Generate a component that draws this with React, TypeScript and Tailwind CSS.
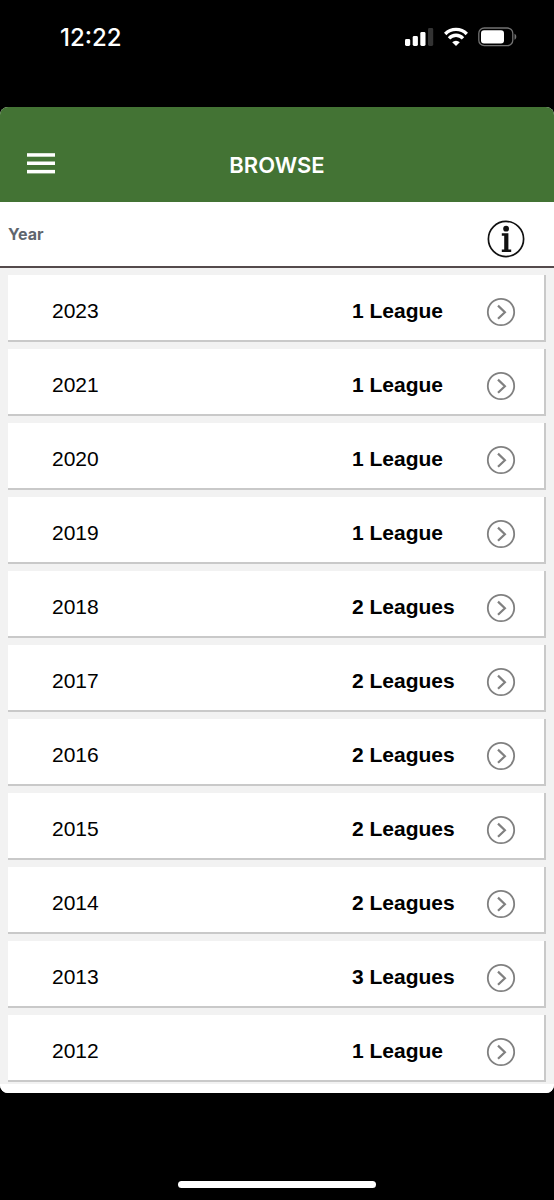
import React from 'react';

type Season = {
  year: number;
  leagues: number;
};

const seasons: Season[] = [
  { year: 2023, leagues: 1 },
  { year: 2021, leagues: 1 },
  { year: 2020, leagues: 1 },
  { year: 2019, leagues: 1 },
  { year: 2018, leagues: 2 },
  { year: 2017, leagues: 2 },
  { year: 2016, leagues: 2 },
  { year: 2015, leagues: 2 },
  { year: 2014, leagues: 2 },
  { year: 2013, leagues: 3 },
  { year: 2012, leagues: 1 },
];

function StatusBar() {
  return (
    <div className="flex h-[107px] items-start justify-between pt-[22px] pr-[37px] pl-[60px] text-white">
      <span className="text-2xl leading-[32px] font-medium">12:22</span>
      <div className="flex h-[30px] items-center gap-[10px]">
        <svg width="29" height="20" viewBox="0 0 29 20" fill="currentColor" aria-hidden="true">
          <rect x="0" y="12" width="5.2" height="7" rx="1.4" />
          <rect x="7.7" y="9" width="5.2" height="10" rx="1.4" />
          <rect x="15.3" y="5" width="5.2" height="14" rx="1.4" />
          <rect x="23" y="1" width="5.2" height="18" rx="1.4" fill="#333333" />
        </svg>
        <svg width="24" height="20" viewBox="0 0 24 20" aria-hidden="true">
          <path d="M1.2 7a15 15 0 0 1 21.6 0" fill="none" stroke="currentColor" strokeWidth="3.3" />
          <path d="M5 11.3a9.6 9.6 0 0 1 14 0" fill="none" stroke="currentColor" strokeWidth="3.3" />
          <path d="M12 19l-3.8-3.8a5.5 5.5 0 0 1 7.6 0z" fill="currentColor" />
        </svg>
        <svg width="39" height="20" viewBox="0 0 39 20" aria-hidden="true">
          <rect x="0.8" y="1" width="34" height="17.6" rx="5.4" fill="none" stroke="#727272" strokeWidth="1.3" />
          <rect x="3" y="3.2" width="23" height="13.2" rx="3" fill="currentColor" />
          <path d="M36.5 6.8c2.4 1 2.4 5 0 6z" fill="#727272" />
        </svg>
      </div>
    </div>
  );
}

function MenuIcon() {
  return (
    <svg width="28" height="22" viewBox="0 0 28 22" fill="currentColor" aria-hidden="true">
      <rect y="0.2" width="28" height="3.5" />
      <rect y="8.5" width="28" height="3.5" />
      <rect y="16.9" width="28" height="3.5" />
    </svg>
  );
}

function InfoIcon() {
  return (
    <svg width="38" height="38" viewBox="0 0 38 38" fill="#111" aria-hidden="true">
      <circle cx="19" cy="19" r="17.6" fill="none" stroke="#111" strokeWidth="1.7" />
      <circle cx="19.1" cy="8.7" r="2.9" />
      <path d="M14.8 13.2h6.6v16.2h2.8v2.6h-9.4v-2.6h2.4V15.8h-2.4z" />
    </svg>
  );
}

function ChevronIcon() {
  return (
    <svg width="30" height="30" viewBox="0 0 30 30" fill="none" stroke="#808080" aria-hidden="true">
      <circle cx="15" cy="15" r="13.2" strokeWidth="1.8" />
      <path d="M12 8.6l6.9 6.6-6.9 6.6" strokeWidth="2.2" />
    </svg>
  );
}

function SeasonRow({ year, leagues }: Season) {
  return (
    <li>
      <button
        type="button"
        className="flex h-[67px] w-full items-center border-r-2 border-b-2 border-[#c9c9c9] bg-white pr-7 pl-11 text-left text-[21px] text-black"
      >
        <span className="flex-1 pt-[6px]">{year}</span>
        <span className="w-[134px] pt-[6px] font-bold">
          {leagues} {leagues === 1 ? 'League' : 'Leagues'}
        </span>
        <span className="pt-2">
          <ChevronIcon />
        </span>
      </button>
    </li>
  );
}

function App() {
  return (
    <div className="flex min-h-screen flex-col bg-black font-['Inter',sans-serif]">
      <StatusBar />

      <div className="overflow-hidden rounded-[8px] bg-white">
        <header className="grid h-[95px] grid-cols-[1fr_auto_1fr] items-center bg-[#437334] px-[27px] pt-[22px] text-white">
          <button type="button" aria-label="Menu" className="w-7 pb-1">
            <MenuIcon />
          </button>
          <h1 className="text-[22px] font-semibold">BROWSE</h1>
        </header>

        <div className="flex h-[66px] items-start justify-between border-b-2 border-[#544a4c] pt-[18px] pr-[29px] pl-2">
          <h2 className="pt-[2px] text-base leading-6 font-bold text-[#5f656e]">Year</h2>
          <button type="button" aria-label="Information">
            <InfoIcon />
          </button>
        </div>

        <ul className="flex flex-col gap-[7px] bg-[#f2f2f2] px-2 pt-[7px] pb-[2px] font-['Liberation_Sans',Arial,sans-serif]">
          {seasons.map((season) => (
            <SeasonRow key={season.year} {...season} />
          ))}
        </ul>
        <div className="h-[9px] bg-white" />
      </div>

      <div className="mt-auto flex justify-center pb-3">
        <div className="h-[7px] w-[198px] rounded-full bg-white" />
      </div>
    </div>
  );
}

export default App;
